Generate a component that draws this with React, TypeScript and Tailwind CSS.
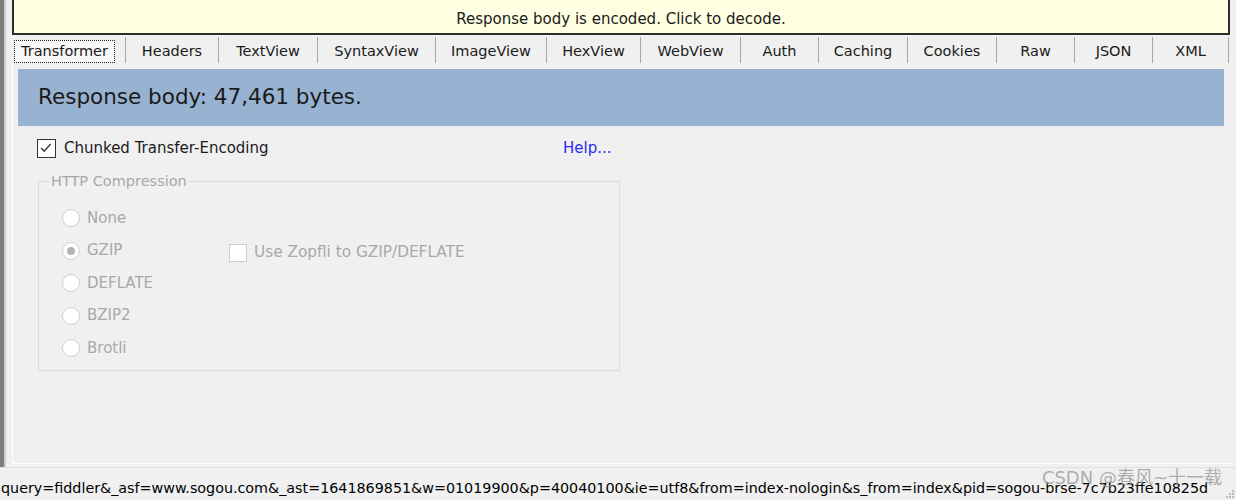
import React from 'react'

const tabs = [
  { label: 'Transformer', w: 'w-[111px]' },
  { label: 'Headers', w: 'w-[93px]' },
  { label: 'TextView', w: 'w-[99px]' },
  { label: 'SyntaxView', w: 'w-[118px]' },
  { label: 'ImageView', w: 'w-[111px]' },
  { label: 'HexView', w: 'w-[94px]' },
  { label: 'WebView', w: 'w-[100px]' },
  { label: 'Auth', w: 'w-[78px]' },
  { label: 'Caching', w: 'w-[89px]' },
  { label: 'Cookies', w: 'w-[89px]' },
  { label: 'Raw', w: 'w-[78px]' },
  { label: 'JSON', w: 'w-[78px]' },
  { label: 'XML', w: 'w-[77px]' },
]

const compressions = ['None', 'GZIP', 'DEFLATE', 'BZIP2', 'Brotli']

const statusText =
  'query=fiddler&_asf=www.sogou.com&_ast=1641869851&w=01019900&p=40040100&ie=utf8&from=index-nologin&s_from=index&pid=sogou-brse-7c7b23ffe10825d'

function Radio({ checked }: { checked: boolean }) {
  return (
    <div className="w-[18px] h-[18px] rounded-full border border-[#cfcfcf] bg-white flex items-center justify-center shrink-0">
      {checked && <div className="w-[8px] h-[8px] rounded-full bg-[#b4b4b4]" />}
    </div>
  )
}

export default function App() {
  return (
    <div className="w-[1236px] h-[500px] bg-[#f0f0f0] overflow-hidden relative font-['DejaVu_Sans',sans-serif] text-[#1a1a1a]">
      <div className="flex h-[467px]">
        {/* left splitter edge */}
        <div className="w-[4px] bg-[#7c7c7c]" />
        <div className="w-[2px] bg-[#cdcdcd]" />

        <div className="flex-1 flex flex-col">
          {/* notification bar */}
          <div className="ml-[6px] w-[1218px] h-[35px] shrink-0 bg-[#ffffe1] border-2 border-t-0 border-[#2e2e2e] flex items-center justify-center pt-[5px] text-[15px] whitespace-nowrap">
            Response body is encoded. Click to decode.
          </div>

          {/* tabs */}
          <div className="ml-[8px] mt-[2px] h-[26px] shrink-0 flex">
            {tabs.map((t, i) => (
              <div
                key={t.label}
                className={`${t.w} h-full flex items-center pt-[3px] text-[14.5px] whitespace-nowrap ${
                  i === 0 ? 'justify-start' : 'justify-center border-l border-[#a8a8a8]'
                } ${i === tabs.length - 1 ? 'border-r' : ''}`}
              >
                {i === 0 ? (
                  <div className="w-[101px] h-full border border-dotted border-[#222] bg-[#f7f7f7] flex items-center justify-center">
                    {t.label}
                  </div>
                ) : (
                  t.label
                )}
              </div>
            ))}
          </div>

          {/* tab panel */}
          <div className="ml-[6px] w-[1219px] flex-1 mb-[3px] border-l border-b border-white pl-[5px] pt-[6px]">
            <div className="w-[1206px] h-[57px] bg-[#98b3d1] flex items-center pl-[20px] text-[21.5px] whitespace-nowrap">
              Response body: 47,461 bytes.
            </div>

            <div className="mt-[12px] h-[20px] flex items-center">
              <div className="ml-[19px] w-[19px] h-[19px] border-[1.5px] border-[#333] bg-white shrink-0">
                <svg viewBox="0 0 19 19" className="w-full h-full">
                  <polyline points="3.5,9 7,12.5 14,4.5" fill="none" stroke="#333" strokeWidth="1.5" />
                </svg>
              </div>
              <span className="ml-[8px] w-[499px] text-[15px] whitespace-nowrap">Chunked Transfer-Encoding</span>
              <span className="text-[15px] text-[#2a2af2] whitespace-nowrap">Help...</span>
            </div>

            {/* HTTP Compression group */}
            <div className="relative ml-[20px] mt-[23px] w-[582px] h-[190px] border border-[#dcdcdc] pl-[23px] pt-[26px] flex flex-col gap-[12.5px]">
              <span className="absolute left-[10px] top-[-11px] px-[2px] bg-[#f0f0f0] text-[14.5px] text-[#a8a8a8] whitespace-nowrap">
                HTTP Compression
              </span>
              {compressions.map((c) => (
                <div key={c} className="h-[20px] flex items-center">
                  <Radio checked={c === 'GZIP'} />
                  <span className="ml-[7px] w-[142px] text-[15px] text-[#a8a8a8] whitespace-nowrap">{c}</span>
                  {c === 'GZIP' && (
                    <div className="flex items-center translate-y-[2px]">
                      <div className="w-[18px] h-[18px] border border-[#cdcdcd] bg-white" />
                      <span className="ml-[7px] text-[15.3px] text-[#a8a8a8] whitespace-nowrap">Use Zopfli to GZIP/DEFLATE</span>
                    </div>
                  )}
                </div>
              ))}
            </div>
          </div>
        </div>
      </div>

      {/* status bar */}
      <div className="h-[33px] border-t border-[#e2e2e2] pt-[12px] pl-[1px] text-[14.3px] leading-[17px] whitespace-nowrap text-black">
        {statusText}
      </div>

      {/* watermark */}
      <div className="absolute right-[14px] bottom-[9px] text-[18px] text-[#9a9a9a]/80 whitespace-nowrap font-['DejaVu_Sans','Noto_Sans_CJK_SC',sans-serif]">
        CSDN @春风~十一载
      </div>

      {/* size grip */}
      <svg className="absolute right-[1px] bottom-[1px]" width="10" height="10" viewBox="0 0 10 10">
        {[
          [8, 2],
          [5, 5],
          [8, 5],
          [2, 8],
          [5, 8],
          [8, 8],
        ].map(([x, y]) => (
          <rect key={`${x}-${y}`} x={x - 1} y={y - 1} width="2" height="2" fill="#b8b8b8" />
        ))}
      </svg>
    </div>
  )
}
